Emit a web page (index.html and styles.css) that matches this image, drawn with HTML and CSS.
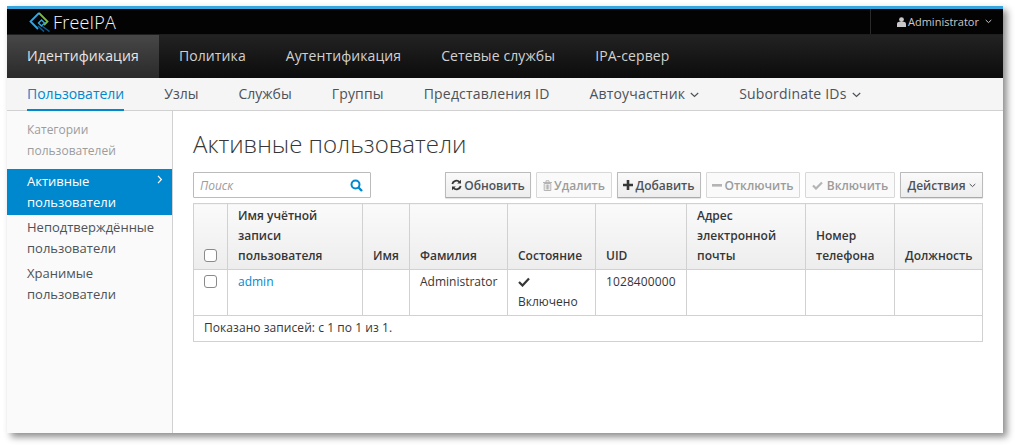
FILE: index.html
```html
<!DOCTYPE html>
<html lang="ru">
<head>
<meta charset="utf-8">
<title>FreeIPA</title>
<link rel="stylesheet" href="styles.css">
</head>
<body>
<div class="window">
  <header class="topbar">
    <div class="brand">
      <svg class="logo" width="22" height="20" viewBox="0 0 22 20" fill="none">
        <path d="M10 1 1.500 9.500 9 17" stroke="#39a5dc" stroke-width="1.800"/>
        <path d="M10 1l8.500 8.500-3.500 3.500" stroke="#7dbb3c" stroke-width="1.800"/>
        <path d="M9.500 11l3-3 3 3-3 3z" stroke="#39a5dc" stroke-width="1.400"/>
        <path d="M9 14l6 5.500M13 14l7.500 5.500" stroke="#0a5c94" stroke-width="1.500"/>
      </svg>
      <span class="brand-name">FreeIPA</span>
    </div>
    <div class="user">
      <svg class="user-icon" width="9" height="10" viewBox="0 0 9 10"><circle cx="4.500" cy="2.600" r="2.400" fill="#c8c8c8"/><path d="M0 10V7.200C0 5.600 1.200 4.800 2.400 4.800h4.200C7.800 4.800 9 5.600 9 7.200V10z" fill="#c8c8c8"/></svg>
      <span>Administrator</span>
      <svg class="chev" width="7" height="5" viewBox="0 0 7 5" fill="none"><path d="M.7 1l2.800 2.600L6.300 1" stroke="#c8c8c8"/></svg>
    </div>
  </header>
  <nav class="mainnav">
    <a class="main-item active">Идентификация</a>
    <a class="main-item">Политика</a>
    <a class="main-item">Аутентификация</a>
    <a class="main-item">Сетевые службы</a>
    <a class="main-item">IPA-сервер</a>
  </nav>
  <nav class="subnav">
    <a class="sub-item current">Пользователи</a>
    <a class="sub-item">Узлы</a>
    <a class="sub-item">Службы</a>
    <a class="sub-item wide">Группы</a>
    <a class="sub-item wide">Представления ID</a>
    <a class="sub-item wide">Автоучастник <svg class="subchev" width="9" height="6" viewBox="0 0 9 6" fill="none"><path d="M.8 1l3.700 3.400L8.200 1" stroke="#4d5258" stroke-width="1.200"/></svg></a>
    <a class="sub-item wide">Subordinate IDs <svg class="subchev" width="9" height="6" viewBox="0 0 9 6" fill="none"><path d="M.8 1l3.700 3.400L8.200 1" stroke="#4d5258" stroke-width="1.200"/></svg></a>
  </nav>
  <div class="body-row">
    <aside class="sidebar">
      <div class="side-title">Категории пользователей</div>
      <a class="side-item selected">Активные пользователи
        <svg class="side-chev" width="6" height="9" viewBox="0 0 6 9" fill="none"><path d="M1 .8l3.400 3.700L1 8.200" stroke="#fff" stroke-width="1.200"/></svg>
      </a>
      <a class="side-item">Неподтверждённые пользователи</a>
      <a class="side-item">Хранимые пользователи</a>
    </aside>
    <main class="content">
      <h1 class="title">Активные пользователи</h1>
      <div class="toolbar">
        <div class="search">
          <span class="search-text">Поиск</span>
          <svg width="13" height="13" viewBox="0 0 13 13" fill="none"><circle cx="5.500" cy="5.500" r="4" stroke="#0088ce" stroke-width="2"/><path d="M8.500 8.500l3.500 3.500" stroke="#0088ce" stroke-width="2.400"/></svg>
        </div>
        <div class="actions">
          <button class="btn w-refresh"><svg width="11" height="12" viewBox="0 0 11 12" fill="none"><path d="M1.300 5A4.300 4.300 0 0 1 8.600 3" stroke="#363636" stroke-width="1.800"/><path d="M9.700 7A4.300 4.300 0 0 1 2.400 9" stroke="#363636" stroke-width="1.800"/><path d="M10 .8V4.600H6.200zM1 11.200V7.400h3.800z" fill="#363636"/></svg>Обновить</button>
          <button class="btn off w-delete"><svg width="9" height="11" viewBox="0 0 9 11" fill="none"><path d="M0 2.500h9M3 2V.8h3V2" stroke="#b4b4b4"/><path d="M1.200 3.500h6.600V10.500H1.200zM3.200 4.500v5M5.800 4.500v5M4.500 4.500v5" stroke="#b4b4b4"/></svg>Удалить</button>
          <button class="btn w-add"><svg width="10" height="10" viewBox="0 0 10 10"><path d="M3.700 0h2.600v3.700H10v2.600H6.300V10H3.700V6.300H0V3.700h3.700z" fill="#363636"/></svg>Добавить</button>
          <button class="btn off w-disable"><svg width="10" height="3" viewBox="0 0 10 3"><rect width="10" height="2.600" fill="#b4b4b4"/></svg>Отключить</button>
          <button class="btn off w-enable"><svg width="11" height="9" viewBox="0 0 11 9" fill="none"><path d="M1 4.500l3 3 6-6" stroke="#b4b4b4" stroke-width="2.200"/></svg>Включить</button>
          <button class="btn w-menu">Действия <svg width="7" height="5" viewBox="0 0 7 5" fill="none"><path d="M.7 1l2.800 2.600L6.300 1" stroke="#4d5258"/></svg></button>
        </div>
      </div>
      <table class="grid">
        <colgroup>
          <col class="c-check"><col class="c-login"><col class="c-name"><col class="c-last"><col class="c-state"><col class="c-uid"><col class="c-mail"><col class="c-phone"><col class="c-job">
        </colgroup>
        <thead>
          <tr>
            <th class="cell-check"><span class="box"></span></th>
            <th>Имя учётной записи пользователя</th>
            <th>Имя</th>
            <th>Фамилия</th>
            <th>Состояние</th>
            <th>UID</th>
            <th>Адрес электронной почты</th>
            <th>Номер телефона</th>
            <th>Должность</th>
          </tr>
        </thead>
        <tbody>
          <tr>
            <td class="cell-check"><span class="box"></span></td>
            <td><a class="link">admin</a></td>
            <td></td>
            <td>Administrator</td>
            <td><svg class="state-check" width="12" height="10" viewBox="0 0 12 10" fill="none"><path d="M1 5l3.500 3.500L11 1.500" stroke="#363636" stroke-width="2.200"/></svg><br>Включено</td>
            <td class="num">1028400000</td>
            <td></td>
            <td></td>
            <td></td>
          </tr>
        </tbody>
        <tfoot>
          <tr><td colspan="9" class="summary">Показано записей: с 1 по 1 из 1.</td></tr>
        </tfoot>
      </table>
    </main>
  </div>
</div>
</body>
</html>
```
FILE: styles.css
```css
* { box-sizing: border-box; }
html, body { height: 100%; }
body {
  margin: 0;
  padding: 6px 13px 14px 7px;
  background: #fff;
  font-family: "Open Sans", sans-serif;
  font-size: 12px;
  color: #363636;
  overflow: hidden;
}
.window {
  height: 427px;
  display: flex;
  flex-direction: column;
  background: #fff;
  box-shadow: 4px 4px 7px rgba(0, 0, 0, .45);
}
.topbar {
  flex: none;
  height: 28px;
  background: #030303;
  border-top: 3px solid #39a5dc;
  display: flex;
  justify-content: space-between;
  color: #c8c8c8;
}
.brand { display: flex; align-items: center; padding-left: 22px; gap: 2px; }
.brand-name { font-size: 18px; font-weight: 300; color: #f6f6f6; letter-spacing: .2px; }
.user {
  width: 133px;
  border-left: 1px solid #2a2a2a;
  display: flex;
  align-items: center;
  padding-left: 26px;
  gap: 2px;
  font-size: 11px;
}
.user .chev { margin-left: 4px; }
.mainnav {
  flex: none;
  height: 44px;
  display: flex;
  background: linear-gradient(#222, #0c0c0c);
  border-top: 1px solid #1e1e1e;
}
.main-item {
  padding: 0 20px 2px;
  display: flex;
  align-items: center;
  font-size: 14px;
  letter-spacing: .1px;
  color: #d1d1d1;
}
.main-item.active {
  background: linear-gradient(#474747, #2a2a2a);
  color: #e6e6e6;
  letter-spacing: .13px;
}
.subnav {
  flex: none;
  height: 33px;
  display: flex;
  gap: 40px;
  padding-left: 20px;
  background: #f5f5f5;
  border-bottom: 1px solid #d1d1d1;
}
.sub-item {
  display: flex;
  align-items: center;
  gap: 5px;
  font-size: 14px;
  color: #4d5258;
  margin-bottom: -1px;
  padding-bottom: 2px;
}
.sub-item.wide { letter-spacing: .18px; }
.sub-item.current {
  color: #0088ce;
  border-bottom: 2px solid #0088ce;
  padding-bottom: 0;
}
.subchev { margin-top: 2px; }
.body-row { flex: 1; display: flex; min-height: 0; }
.sidebar {
  flex: none;
  width: 166px;
  background: #fafafa;
  border-right: 1px solid #d1d1d1;
  padding-top: 8px;
}
.side-title {
  padding: 0 40px 0 20px;
  line-height: 21px;
  font-size: 12px;
  color: #9c9c9c;
  margin-bottom: 8px;
}
.side-item {
  display: block;
  position: relative;
  padding: 2px 30px 0 20px;
  line-height: 21px;
  height: 46px;
  font-size: 13px;
  color: #4d5258;
}
.side-item.selected { background: #0088ce; color: #fff; }
.side-chev { position: absolute; right: 9px; top: 6px; }
.content { flex: 1; padding: 0 20px; min-width: 0; }
.title {
  margin: 17px 0 12px;
  font-size: 24px;
  line-height: 32px;
  font-weight: 300;
  color: #363636;
}
.toolbar {
  display: flex;
  justify-content: space-between;
  align-items: center;
  height: 26px;
  width: 790px;
  margin-bottom: 5px;
}
.search {
  width: 178px;
  height: 26px;
  border: 1px solid #bbb;
  border-radius: 1px;
  padding: 0 7px 0 6px;
  display: flex;
  align-items: center;
  justify-content: space-between;
  background: #fff;
}
.search-text { font-style: italic; font-size: 12px; color: #9c9c9c; }
.actions { display: flex; gap: 5px; }
.btn {
  height: 26px;
  padding: 0;
  display: flex;
  align-items: center;
  justify-content: center;
  gap: 2px;
  border: 1px solid #bbb;
  border-bottom-color: #aaa;
  border-radius: 1px;
  background: linear-gradient(#fafafa, #ededed);
  box-shadow: 0 1px 1px rgba(0,0,0,.12);
  font-family: "Open Sans", sans-serif;
  font-size: 12px;
  font-weight: 600;
  color: #4d5258;
}
.btn.off {
  background: #fafafa;
  border-color: #d8d8d8;
  box-shadow: none;
  color: #9c9c9c;
}
.w-refresh { width: 86px; }
.w-delete { width: 76px; }
.w-add { width: 84px; }
.w-disable { width: 94px; }
.w-enable { width: 90px; gap: 4px; }
.w-menu { width: 83px; gap: 3px; }
.grid {
  width: 789px;
  table-layout: fixed;
  border-collapse: collapse;
  border: 1px solid #d1d1d1;
}
.c-check { width: 34px; }
.c-login { width: 135px; }
.c-name { width: 47px; }
.c-last { width: 98px; }
.c-state { width: 88px; }
.c-uid { width: 91px; }
.c-mail { width: 119px; }
.c-phone { width: 89px; }
.c-job { width: 88px; }
.grid th {
  border: 1px solid #d1d1d1;
  background: linear-gradient(#fafafa, #ededed);
  padding: 2px 10px 3px;
  vertical-align: bottom;
  text-align: left;
  font-size: 12px;
  line-height: 20px;
  font-weight: 600;
  color: #363636;
  overflow-wrap: break-word;
}
.grid td {
  border: 1px solid #d1d1d1;
  padding: 2px 10px 3px;
  vertical-align: top;
  font-size: 12px;
  line-height: 20px;
  height: 46px;
  color: #363636;
}
.grid th:last-child { padding-right: 0; }
.grid .cell-check { padding: 0 0 7px 10px; }
.grid td.cell-check { padding-top: 5px; }
.box {
  display: block;
  width: 13px;
  height: 13px;
  border: 1px solid #8a8a8a;
  border-radius: 3px;
  background: #fff;
}
.link { color: #0088ce; }
.num { letter-spacing: .1px; }
.state-check { vertical-align: -1px; }
.grid td.summary {
  height: 26px;
  padding: 2px 10px 3px;
  font-size: 12px;
  letter-spacing: .06px;
  vertical-align: middle;
}
```
